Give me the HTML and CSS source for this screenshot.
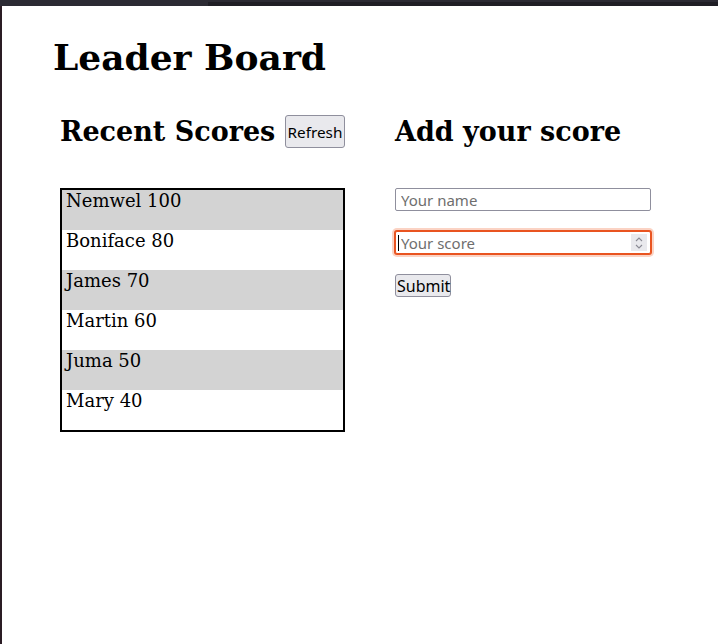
FILE: index.html
```html
<!DOCTYPE html>
<html lang="en">
<head>
<meta charset="utf-8">
<title>Leader Board</title>
<link rel="stylesheet" href="styles.css">
</head>
<body>
<div class="topbar"><div class="tab-left"></div><div class="tab-right"></div></div>
<main class="page">
  <h1 class="title">Leader Board</h1>
  <div class="columns">
    <section class="scores">
      <div class="head-row">
        <h2 class="heading">Recent Scores</h2>
        <button class="btn btn-refresh" type="button">Refresh</button>
      </div>
      <ul class="score-list">
        <li class="row">Nemwel 100</li>
        <li class="row">Boniface 80</li>
        <li class="row">James 70</li>
        <li class="row">Martin 60</li>
        <li class="row">Juma 50</li>
        <li class="row">Mary 40</li>
      </ul>
    </section>
    <section class="add">
      <div class="head-row">
        <h2 class="heading">Add your score</h2>
      </div>
      <form class="form">
        <input class="field" type="text" placeholder="Your name">
        <div class="field-wrap">
          <input class="field field-focus" type="text" placeholder="Your score">
          <span class="caret"></span>
          <span class="spinner">
            <svg width="10" height="14" viewBox="0 0 10 14"><path d="M2 5 L5 2 L8 5 M2 9 L5 12 L8 9" fill="none" stroke="#8a8a94" stroke-width="1.1"/></svg>
          </span>
        </div>
        <div><button class="btn btn-submit" type="button">Submit</button></div>
      </form>
    </section>
  </div>
</main>
</body>
</html>
```
FILE: styles.css
```css
html, body {
  margin: 0;
  padding: 0;
  background: #ffffff;
}
body {
  font-family: "DejaVu Serif", serif;
  color: #000;
}
.topbar {
  display: flex;
  height: 6px;
  background: #2b2a33;
}
.tab-left {
  width: 208px;
  background: #2b2a33;
}
.tab-right {
  flex: 1;
  margin-top: 2px;
  background: #1f1e25;
}
.page {
  border-left: 2px solid #2a1c24;
  min-height: 638px;
  box-sizing: border-box;
  padding-left: 51px;
  padding-top: 1px;
}
.title {
  font-size: 36px;
  font-weight: bold;
  margin: 29px 0 0 0;
  line-height: normal;
}
.columns {
  display: flex;
  gap: 50px;
  padding-left: 7px;
  margin-top: 37px;
}
.scores {
  width: 285px;
}
.head-row {
  display: flex;
  justify-content: space-between;
  align-items: stretch;
  height: 33px;
}
.heading {
  font-size: 27px;
  font-weight: bold;
  margin: 0;
  line-height: 33px;
}
.btn {
  font-family: "Noto Sans", sans-serif;
  font-size: 16px;
  color: #000;
  background: #e9e9ed;
  border: 1px solid #8f8f9d;
  border-radius: 3px;
  padding: 0 1px;
}
.btn-refresh {
  width: 60px;
  font-size: 15.3px;
  padding: 0;
}
.btn-submit {
  height: 23px;
  width: 56px;
  line-height: 20px;
}
.score-list {
  list-style: none;
  margin: 40px 0 0 0;
  padding: 0;
  border: 2px solid #000;
}
.row {
  height: 40px;
  box-sizing: border-box;
  font-size: 18px;
  line-height: 21px;
  padding-left: 4px;
}
.row:nth-child(odd) {
  background: #d3d3d3;
}
.add {
  width: 256px;
}
.form {
  margin-top: 40px;
  display: flex;
  flex-direction: column;
  gap: 20px;
}
.field {
  display: block;
  width: 256px;
  height: 23px;
  box-sizing: border-box;
  margin: 0;
  border: 1px solid #8f8f9d;
  border-radius: 2px;
  padding: 0 5px;
  font-family: "Noto Sans", sans-serif;
  font-size: 15px;
  color: #000;
  background: #fff;
}
.field::placeholder {
  color: #6e6e6e;
}
.field-wrap {
  position: relative;
  width: 256px;
}
.field-focus {
  border-color: #e95420;
  box-shadow: 0 0 0 1px #e95420, 0 0 0 3px #fbd3c4;
  outline: none;
}
.caret {
  position: absolute;
  left: 3px;
  top: 4px;
  width: 1px;
  height: 16px;
  background: #000;
}
.spinner {
  position: absolute;
  right: 4px;
  top: 3px;
  width: 16px;
  height: 17px;
  background: #e9e9ed;
  display: flex;
  align-items: center;
  justify-content: center;
}
```
